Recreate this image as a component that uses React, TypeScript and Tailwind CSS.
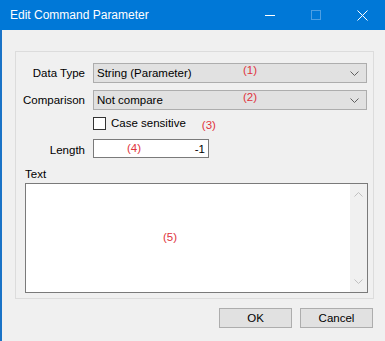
import React from 'react';

const Chevron = ({ up = false, color = '#5f5f5f' }: { up?: boolean; color?: string }) => (
  <svg width="9" height="5" viewBox="0 0 9 5" className={up ? 'rotate-180' : ''}>
    <path d="M0.5 0.5 L4.5 4.5 L8.5 0.5" fill="none" stroke={color} strokeWidth="1" />
  </svg>
);

const Combo = ({ value, mark }: { value: string; mark: string }) => (
  <div className="relative flex items-center w-[274px] h-[20px] bg-[#e1e1e1] border border-[#adadad] pl-[3px] pr-[7px]">
    <span className="text-black">{value}</span>
    <span className="absolute left-[149px] top-[-1px] text-[#e0323c]">{mark}</span>
    <span className="ml-auto">
      <Chevron />
    </span>
  </div>
);

const App = () => {
  return (
    <div
      className="w-[385px] h-[341px] overflow-hidden bg-[#f0f0f0] text-[11.5px] leading-[14px] text-black flex flex-col"
      style={{ fontFamily: '"Liberation Sans", "Noto Sans CJK JP", sans-serif' }}
    >
      {/* Title bar */}
      <div className="h-[30px] shrink-0 bg-[#0078d7] flex items-center text-white">
        <span className="ml-[10px] text-[12px]">Edit Command Parameter</span>
        <div className="ml-auto flex items-center h-full">
          <div className="w-[46px] h-full flex items-center justify-center">
            <div className="w-[10px] h-px bg-white"></div>
          </div>
          <div className="w-[46px] h-full flex items-center justify-center">
            <div className="w-[10px] h-[10px] border border-[#4d9fe3]"></div>
          </div>
          <div className="w-[46px] h-full flex items-center justify-center">
            <svg width="11" height="11" viewBox="0 0 11 11">
              <path d="M0.5 0.5 L10.5 10.5 M10.5 0.5 L0.5 10.5" stroke="white" strokeWidth="1" />
            </svg>
          </div>
        </div>
      </div>

      {/* Body */}
      <div className="flex-1 border-l-2 border-[#1a73c7] pl-[13px] pt-[21px]">
        {/* Group box */}
        <div className="w-[359px] h-[248px] border border-[#dcdcdc] pt-[11px]">
          <div className="flex items-center">
            <span className="w-[69px] text-right">Data Type</span>
            <div className="ml-[8px]">
              <Combo value="String (Parameter)" mark="(1)" />
            </div>
          </div>
          <div className="flex items-center mt-[7px]">
            <span className="w-[69px] text-right">Comparison</span>
            <div className="ml-[8px]">
              <Combo value="Not compare" mark="(2)" />
            </div>
          </div>
          <div className="flex items-center mt-[6px] ml-[77px] h-[14px]">
            <div className="w-[13px] h-[13px] bg-white border border-[#333333]"></div>
            <span className="ml-[5px]">Case sensitive</span>
            <span className="ml-[16px] mt-[4px] text-[#e0323c]">(3)</span>
          </div>
          <div className="flex items-center mt-[9px]">
            <span className="w-[69px] text-right mt-[3px]">Length</span>
            <div className="ml-[8px] relative w-[116px] h-[19px] bg-white border border-[#7a7a7a] flex items-center justify-end pr-[3px]">
              <span className="absolute left-[33px] top-[1px] text-[#e0323c]">(4)</span>
              <span>-1</span>
            </div>
          </div>
          <div className="ml-[9px] mt-[9px] h-[14px]">Text</div>
          <div className="ml-[9px] mt-[2px] w-[343px] h-[110px] bg-white border border-[#7a7a7a] flex">
            <div className="flex-1 flex items-center text-[#e0323c]">
              <span className="ml-[137px] mt-[-2px]">(5)</span>
            </div>
            <div className="w-[17px] bg-[#f0f0f0] flex flex-col items-center justify-between py-[8px]">
              <Chevron up color="#c0c0c0" />
              <Chevron color="#c0c0c0" />
            </div>
          </div>
        </div>

        {/* Buttons */}
        <div className="flex mt-[9px] ml-[204px] gap-[8px]">
          <button className="w-[73px] h-[20px] bg-[#e1e1e1] border border-[#adadad] text-[11.5px] leading-[14px]">OK</button>
          <button className="w-[73px] h-[20px] bg-[#e1e1e1] border border-[#adadad] text-[11.5px] leading-[14px]">Cancel</button>
        </div>
      </div>
    </div>
  );
};

export default App;
